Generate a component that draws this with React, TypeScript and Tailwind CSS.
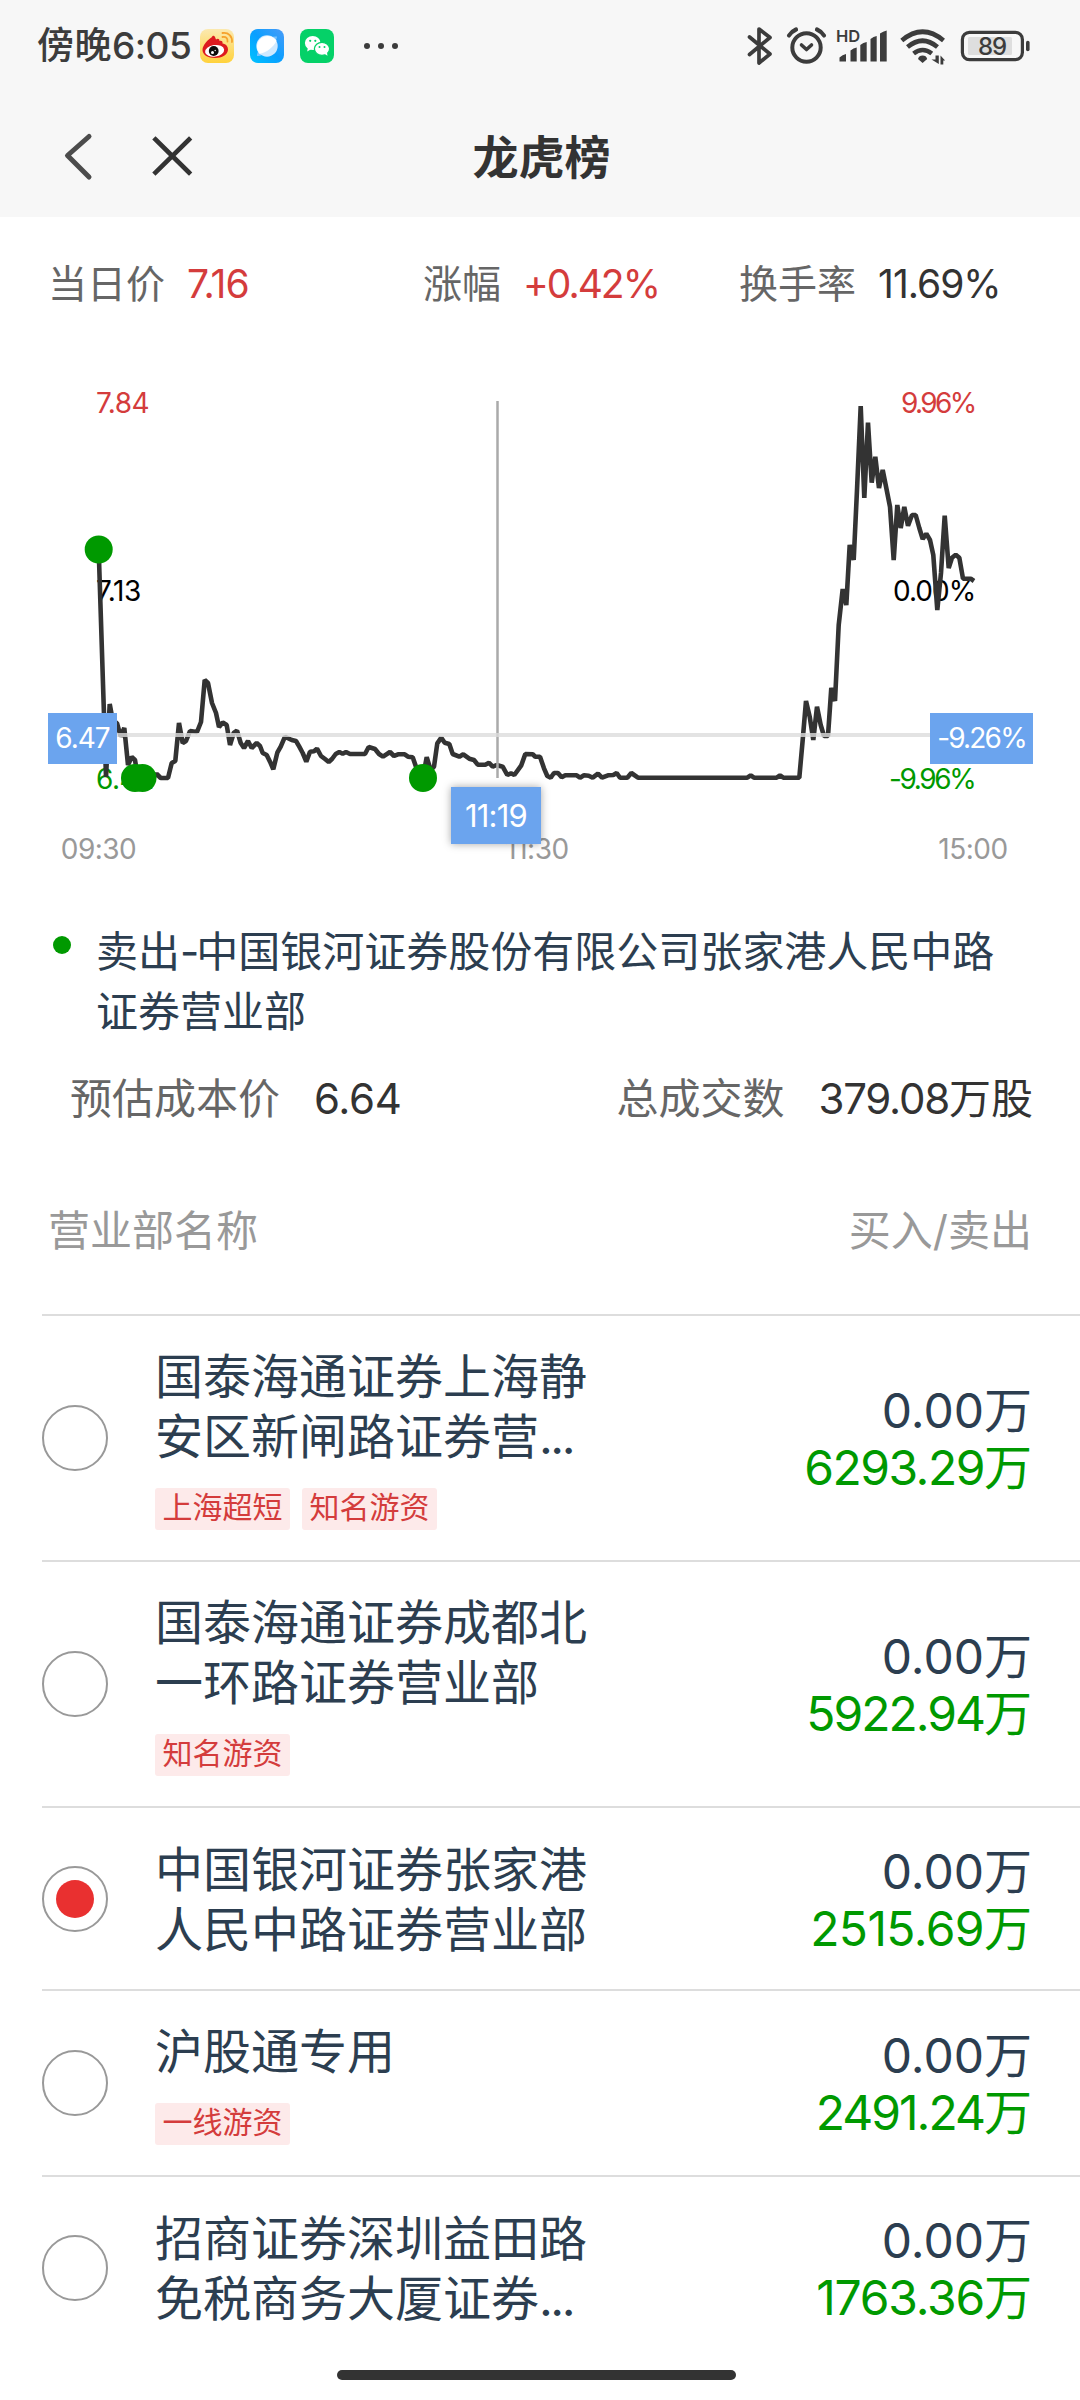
import { useState } from "react";
import clsx from "clsx";

type Seat = {
  id: number;
  lines: string[];
  tags: string[];
  buy: string;
  sell: string;
  tracking: string;
};

const SEATS: Seat[] = [
  { id: 1, lines: ["国泰海通证券上海静", "安区新闸路证券营..."], tags: ["上海超短", "知名游资"], buy: "0.00", sell: "6293.29", tracking: "tracking-[-1.500px]" },
  { id: 2, lines: ["国泰海通证券成都北", "一环路证券营业部"], tags: ["知名游资"], buy: "0.00", sell: "5922.94", tracking: "tracking-[-2px]" },
  { id: 3, lines: ["中国银河证券张家港", "人民中路证券营业部"], tags: [], buy: "0.00", sell: "2515.69", tracking: "tracking-[-0.600px]" },
  { id: 4, lines: ["沪股通专用"], tags: ["一线游资"], buy: "0.00", sell: "2491.24", tracking: "tracking-[-2px]" },
  { id: 5, lines: ["招商证券深圳益田路", "免税商务大厦证券..."], tags: [], buy: "0.00", sell: "1763.36", tracking: "tracking-[-1.200px]" },
];

// minute line of the day, chart coordinates
const PRICE_LINE =
  "98.7,550 106,777 109.7,704 113,722 117,723 120.7,736.5 124.3,728 128,765 131.7,757 135,760 138,778 153,777 156.7,774 160.7,778 168,778 171.7,763 175.3,761 179,723 182.7,743 186,741 190,731 197,732 201,722 204.7,680 208,683 212,703 216,713 219,727 222.7,722.5 226.7,725 230,745 233.7,733 237,730.7 240.7,743 244,748 248,741 251.7,748 256.7,743 260,746 262.7,753 266.7,755 270,761.7 273.3,769.3 277.3,752.7 280.7,746.7 285,736.7 291.7,740 296,741 299.3,746.7 302.7,753 306.3,761.7 310,751.7 314,751.3 317,748.7 321,756 325,759 328.7,762 332,759 335.7,754 339.3,752 342.7,753.7 346,752 350,754 365,754 368.7,747 375,749 379,754 383,756.7 390,752 394,756 398,754.3 " +
  "404.7,754.3 408,756.7 412.7,757.3 416,766.7 423,776.7 426.7,757.3 430.7,770 434,766.7 437.3,743.3 441.3,737.7 444.7,742.7 449.3,744 452.7,754 459.3,756.7 463.3,754.3 469.3,758.7 474,760 477.7,764.7 485.3,764.7 489,762.7 492.7,766.7 496.7,765 502.7,766.7 507.3,775 511,773.3 514.3,775 521.3,765.3 525.3,754 532.7,754.3 535.3,756.7 540,756.7 544,768.3 547.3,776 550.7,777.7 554,773 558,773 561.7,777.3 565.3,775.3 576.7,775.3 580,777.7 584,775.3 588.7,775.7 592.7,777.7 598,773.7 602,777.7 608,775.3 613.3,775 616.7,773 620,777.7 627.3,777.7 631.3,773 638,777.7 747.3,777.7 750.7,775.3 754,777.7 776.7,777.7 780,775.5 783.3,777.7 " +
  "799.3,777.7 802.7,740 806,701 809.7,716.7 813.3,740 817,706.7 820.7,725 824,736 828,736 831.3,688 835,701 838.7,625 842.7,589 846.3,605 849.7,545 853.7,560 857,490 860.7,406 864.3,498 868,422.7 871.7,482.7 875.3,456.7 879,488 882.7,470 886.3,488 890,506.7 893.7,560 897.3,505 900.7,528 904.3,507 908,525.7 912,515 915.7,515 919.3,528 922.7,539 926.3,533.7 930,540 933.3,555 937.3,610 941,573 944.7,515.7 948.7,568 952,557.7 955.7,554.7 959.3,557.7 963,578.7 970.7,578.7 974,581";

const TRADES = [
  [98.7, 549.5],
  [135, 778],
  [142.5, 778],
  [423, 778],
];

function WeiboIcon() {
  return (
    <svg viewBox="0 0 34 34" className="size-[34px]">
      <defs>
        <linearGradient id="wb" x1="0" y1="0" x2="0" y2="1">
          <stop offset="0" stopColor="#fbe9b0" />
          <stop offset="1" stopColor="#ffd23c" />
        </linearGradient>
      </defs>
      <rect width="34" height="34" rx="8" fill="url(#wb)" />
      <path d="M2.500 21c0-5 6-11 9-12.500c1-2 2.500-2.500 3.500-.5l1 2.500c2-1.500 3.500-.5 3.500 1.500c1.500-.5 3.500 0 3 2.500c3.500.5 5.500 3 5.500 6c0 5-6 8.500-13 8.500s-12.500-3-12.500-8z" fill="#dd1a1f" />
      <ellipse cx="14.500" cy="21.800" rx="9.600" ry="5.800" fill="#fff" transform="rotate(-8 15 21)" />
      <circle cx="13.700" cy="22" r="4.900" fill="#0c0c0c" />
      <circle cx="12.500" cy="23.600" r="1.500" fill="#fff" />
      <circle cx="15.200" cy="21.500" r=".7" fill="#fff" />
      <path d="M22.500 4c6-1 10 3.500 9.500 9M22.500 8c3.500-.8 5.500 1.500 5 4.700" fill="none" stroke="#f6a22c" strokeWidth="1.800" strokeLinecap="round" />
    </svg>
  );
}

function BrowserIcon() {
  return (
    <svg viewBox="0 0 34 34" className="size-[34px]">
      <defs>
        <linearGradient id="br" x1="0" y1="1" x2="1" y2="0">
          <stop offset="0" stopColor="#00c3ff" />
          <stop offset=".5" stopColor="#0a9fff" />
          <stop offset="1" stopColor="#4a9bf8" />
        </linearGradient>
      </defs>
      <rect width="34" height="34" rx="8" fill="url(#br)" />
      <path d="M27 7.500c0 3-4 10-9 14.500c-4 3.600-8.500 5.500-11 5c0-3 3-12 8-16c4-3 9-4 12-3.500z" fill="#7cc4ff" />
      <circle cx="17" cy="17" r="10.700" fill="#cfe9ff" />
      <path d="M26.500 11.500a10.700 10.700 0 1 0-17.500 12.500l.5 .8C16 24 24 18 26.500 11.500z" fill="#fff" />
    </svg>
  );
}

function WechatIcon() {
  return (
    <svg viewBox="0 0 34 34" className="size-[34px]">
      <rect width="34" height="34" rx="8" fill="#05d168" />
      <ellipse cx="12.700" cy="14" rx="7.800" ry="6.900" fill="#fff" />
      <path d="M8 18l-.8 4.500 4.300-2.500z" fill="#fff" />
      <ellipse cx="22" cy="19.800" rx="7.600" ry="6.500" fill="#fff" stroke="#05d168" strokeWidth="1.200" />
      <path d="M24 24.500l3.500 2.300-.6-3.600z" fill="#fff" />
      <g fill="#05d168">
        <circle cx="10.200" cy="11.800" r="1.100" />
        <circle cx="15.300" cy="11.800" r="1.100" />
        <circle cx="19.500" cy="18" r="1" />
        <circle cx="24.500" cy="18" r="1" />
      </g>
    </svg>
  );
}

function SystemIcons() {
  return (
    <svg viewBox="744 20 292 50" className="h-[50px] w-[292px]" fill="none" stroke="#3c3c3c">
      {/* bluetooth */}
      <path d="M749.500 36l20.500 17-11 9V28l11 8.500-20.500 17" strokeWidth="3.700" strokeLinecap="round" strokeLinejoin="round" />
      {/* alarm */}
      <circle cx="806.500" cy="46.500" r="14.200" strokeWidth="4" />
      <path d="M801.500 44l5 4.500 5-4.500" strokeWidth="3.600" strokeLinecap="round" strokeLinejoin="round" />
      <path d="M789 34.500q2.500-4 7-6M824 34.500q-2.500-4-7-6" strokeWidth="4.200" strokeLinecap="round" />
      {/* signal */}
      <text x="836" y="41" fill="#3c3c3c" stroke="none" className="font-['Inter',sans-serif] text-[16.500px] font-semibold">HD</text>
      <g fill="#3c3c3c" stroke="none">
        <path d="M839.500 60.500v-4q3-3 6.500-3.500v7.500zM850.500 60.500V49.500q3-2.500 6.200-3v14zM860.300 60.500V44q3-2.500 6.400-3v19.500zM870.500 60.500V38q3-2.500 6.200-3v25.500zM880 60.500V32.500q3-2 6.700-3v31z" />
        <path d="M922.600 62l-4.600-4q1-3.400 4.600-3.400t4.600 3.400z" />
        <path d="M935.500 54.500h3.300v8.500l-7.300-4.500h4zM940.500 63.500v-9l4.600 5h-1.800v4z" />
      </g>
      {/* wifi */}
      <path d="M901.800 39.500q20.800-17.500 41.700 0M907.500 46q15-12.500 30 0M913.600 52.500q9-7 18.200 0" strokeWidth="4.600" />
      {/* battery */}
      <rect x="962.400" y="31.400" width="60" height="27.200" rx="7" strokeWidth="3.200" />
      <rect x="968" y="36" width="44" height="18" rx="1.500" fill="#dedede" stroke="none" />
      <path d="M1027.800 41.500v7" strokeWidth="3.600" strokeLinecap="round" />
      <text x="992" y="53.500" textAnchor="middle" fill="#3c3c3c" stroke="none" className="font-['Inter',sans-serif] text-[24px] font-medium tracking-[-1px]">89</text>
    </svg>
  );
}

function StatusBar() {
  return (
    <div className="flex h-[91px] items-center justify-between pl-[37px] pr-[44px] text-[#3c3c3c]">
      <div className="flex items-center">
        <span className="w-[163px] whitespace-nowrap text-[37px] font-medium leading-none">
          <span className="tracking-[0.500px]">傍晚</span>
          <span className="tracking-[-0.500px]">6:05</span>
        </span>
        <div className="flex gap-4">
          <WeiboIcon />
          <BrowserIcon />
          <WechatIcon />
        </div>
        <div className="ml-[30px] flex gap-2">
          <i className="size-1.5 rounded-full bg-current" />
          <i className="size-1.5 rounded-full bg-current" />
          <i className="size-1.5 rounded-full bg-current" />
        </div>
      </div>
      <SystemIcons />
    </div>
  );
}

function NavBar() {
  return (
    <div className="grid h-[126px] grid-cols-3 items-center">
      <svg viewBox="0 93 360 126" className="h-[126px] w-[360px]" fill="none" stroke="#333" strokeLinecap="round">
        <path d="M89 138.500L67.500 157.500 89 179" stroke="#4c4c4c" strokeWidth="5" strokeLinejoin="round" />
        <path d="M155.500 141.500l33.500 33M189 141.500l-33.500 33" strokeWidth="4.600" strokeLinecap="square" />
      </svg>
      <h1 className="pl-[3px] pt-1.5 text-center text-[46px] font-bold leading-none text-[#333]">龙虎榜</h1>
    </div>
  );
}

function MinuteChart() {
  return (
    <div className="relative h-[500px]">
      <svg viewBox="0 380 1080 500" className="block h-[500px] w-[1080px] text-[28px]">
        <g className="tracking-[-0.500px]">
          <text x="96" y="412.500" fill="#d43c3c">7.84</text>
          <text x="96" y="600.500">7.13</text>
          <text x="96" y="789" fill="#090">6.42</text>
        </g>
        <text x="901" y="412.500" fill="#d43c3c" className="tracking-[-2.600px]">9.96%</text>
        <text x="893" y="600.500" className="tracking-[-1px]">0.00%</text>
        <text x="889" y="789" fill="#090" className="tracking-[-2.400px]">-9.96%</text>
        <g textAnchor="middle" fill="#999" className="tracking-[-0.500px]">
          <text x="98.500" y="858.500">09:30</text>
          <text x="537" y="858.500">11:30</text>
          <text x="973" y="858.500">15:00</text>
        </g>
        <polyline points={PRICE_LINE} fill="none" stroke="#333" strokeWidth="4.600" strokeLinejoin="bevel" />
        {TRADES.map(([x, y]) => (
          <circle key={x} cx={x} cy={y} r="14" fill="#090" />
        ))}
        <path d="M497.500 401V778" stroke="#aaa" strokeWidth="2.500" />
        <path d="M48 735H1033" stroke="#dcdcdc" strokeOpacity=".8" strokeWidth="4" />
      </svg>
      <div className="absolute left-[48px] top-[333px] h-[51px] w-[69px] bg-[#6ba4ee] text-center text-[28px] leading-[51px] tracking-[-1px] text-white">6.47</div>
      <div className="absolute left-[930px] top-[333px] h-[51px] w-[103px] bg-[#6ba4ee] text-center text-[28px] leading-[51px] tracking-[-1.800px] text-white">-9.26%</div>
      <div className="absolute left-[451px] top-[407px] h-[57px] w-[90px] bg-[#6ba4ee] text-center text-[31px] leading-[57px] tracking-[-0.800px] text-white shadow-[0_0_8px_rgba(0,0,0,0.35)]">11:19</div>
    </div>
  );
}

function SeatName({ text }: { text: string }) {
  if (!text.endsWith("...")) return <p>{text}</p>;
  return (
    <p>
      {text.slice(0, -3)}
      <span className="tracking-[-2.500px]">...</span>
    </p>
  );
}

function SeatRow({ seat, checked, onSelect }: { seat: Seat; checked: boolean; onSelect: () => void }) {
  return (
    <li className="ml-[42px] flex min-h-[183px] items-center border-t-2 border-[#ddd] py-[30px] pr-[48px]" onClick={onSelect}>
      <span className="flex size-[66px] shrink-0 items-center justify-center rounded-full border-2 border-[#999]">
        <span className={clsx("size-[38px] rounded-full", checked && "bg-[#e93030]")} />
      </span>
      <div className="ml-[47px] flex-1">
        <div className="-mb-px pt-px text-[48px] leading-[60px]">
          {seat.lines.map((line) => (
            <SeatName key={line} text={line} />
          ))}
        </div>
        {seat.tags.length > 0 && (
          <div className="mt-[22px] flex gap-3">
            {seat.tags.map((tag) => (
              <span key={tag} className="h-[42px] w-[135px] rounded-[3px] bg-[#fdeaea] text-center text-[30px] leading-[38px] text-[#d43c3c]">
                {tag}
              </span>
            ))}
          </div>
        )}
      </div>
      <div className="pt-0.5 text-right text-[48px] leading-[57px]">
        <p>{seat.buy}万</p>
        <p className="text-[#090]">
          <span className={seat.tracking}>{seat.sell}</span>万
        </p>
      </div>
    </li>
  );
}

export default function App() {
  const [selected, setSelected] = useState(3);

  return (
    <div className="flex h-[2400px] w-[1080px] flex-col overflow-hidden bg-white font-['Inter','Noto_Sans_CJK_SC',sans-serif] text-[#2c3e50]">
      <header className="bg-[#f7f7f7]">
        <StatusBar />
        <NavBar />
      </header>

      <div className="flex h-[163px] items-center pb-[28px] pl-[48px] text-[39px] text-[#666]">
        <p className="w-[375px]">
          当日价<span className="ml-[22px] tracking-[-0.800px] text-[#d43c3c]">7.16</span>
        </p>
        <p className="w-[316px]">
          涨幅<span className="ml-[22px] tracking-[-2px] text-[#d43c3c]">+0.42%</span>
        </p>
        <p>
          换手率<span className="ml-[22px] tracking-[-1px] text-[#333]">11.69%</span>
        </p>
      </div>

      <MinuteChart />

      <div className="flex pl-[53px] pt-[41px]">
        <i className="mt-[15px] size-[18px] shrink-0 rounded-full bg-[#090]" />
        <p className="-mb-px ml-[25px] w-[900px] pt-px text-[42px] leading-[60px]">
          卖出<span className="tracking-[-3px]">-</span>中国银河证券股份有限公司张家港人民中路证券营业部
        </p>
      </div>

      <div className="mt-[27px] flex h-[60px] items-center justify-between pl-[70px] pr-[47px] text-[42px] text-[#666]">
        <p>
          预估成本价<span className="ml-[34px] tracking-[-0.300px] text-[#333]">6.64</span>
        </p>
        <p>
          总成交数<span className="ml-[34px] text-[#333]"><span className="tracking-[-1.200px]">379.08</span>万股</span>
        </p>
      </div>

      <div className="mt-[72px] flex h-[60px] items-center justify-between pl-[48px] pr-[48px] text-[42px] text-[#999]">
        <span>营业部名称</span>
        <span>买入/卖出</span>
      </div>

      <ul className="mt-[54px]">
        {SEATS.map((seat) => (
          <SeatRow key={seat.id} seat={seat} checked={seat.id === selected} onSelect={() => setSelected(seat.id)} />
        ))}
      </ul>

      <div className="mb-5 ml-[337px] mt-auto h-2.5 w-[399px] rounded-full bg-[#333]" />
    </div>
  );
}
